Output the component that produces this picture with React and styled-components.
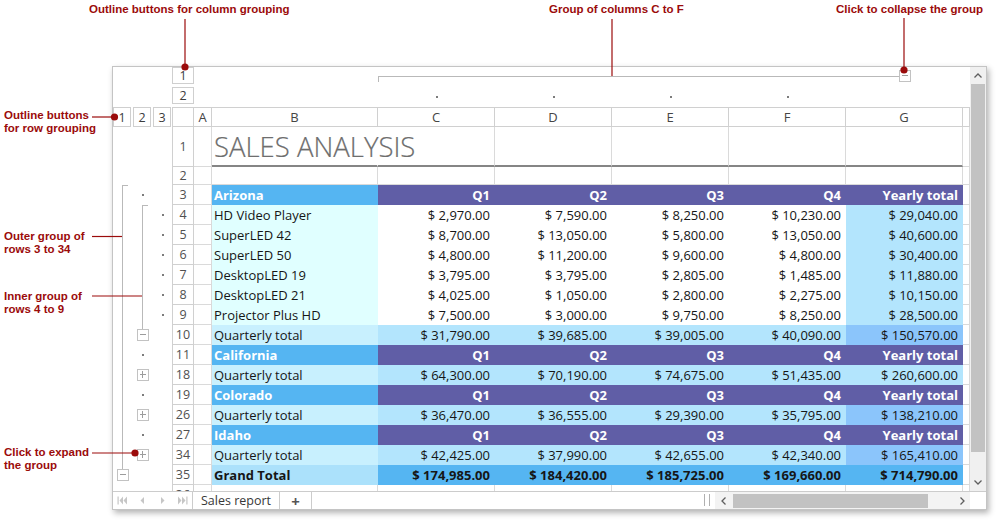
import React from 'react';
import styled, { createGlobalStyle, css } from 'styled-components';

const GlobalStyle = createGlobalStyle`
  html, body {
    margin: 0;
    padding: 0;
    background: #ffffff;
  }
  body {
    font-family: "Open Sans", "Noto Sans", sans-serif;
  }
`;

const GRID = '#dadada';
const HEAD_LINE = '#d0d0d0';
const OUTLINE = '#b9b9b9';
const RED = '#9b0b0b';

const FILL = {
  state: '#55b5f2',
  purple: '#605ea6',
  cyan: '#e0ffff',
  sky: '#b3e5fd',
  pale: '#c8f0fe',
  deep: '#8bc5fb',
  grandB: '#abe1fb',
};

// A..H widths
const COL_W = [18, 166, 117, 117, 117, 117, 117, 7];
const LETTERS = ['A', 'B', 'C', 'D', 'E', 'F', 'G', ''];
const LANE_W = [20, 20, 19];

const Page = styled.div`
  position: relative;
  width: 1000px;
  height: 528px;
  padding: 66px 0 0 112px;
  box-sizing: border-box;
  overflow: hidden;
`;

const Window = styled.div`
  width: 875px;
  box-sizing: border-box;
  border: 1px solid #c4c4c4;
  background: #fff;
  box-shadow: 2px 3px 6px rgba(0, 0, 0, 0.3);
  display: flex;
  flex-direction: column;
`;

const Body = styled.div`
  display: flex;
  height: 424px;
`;

const Sheet = styled.div`
  width: 857px;
  height: 424px;
  overflow: hidden;
  display: flex;
  flex-direction: column;
`;

const Row = styled.div`
  display: flex;
  flex: none;
  height: ${p => p.$h || 20}px;
`;

const OutlineArea = styled.div`
  display: flex;
  flex: none;
  width: 59px;
`;

const Lane = styled.div`
  position: relative;
  flex: none;
  width: ${p => p.$w}px;
  display: flex;
  align-items: center;

  ${p => p.$line && css`
    &::before {
      content: '';
      position: absolute;
      left: 9px;
      top: 0;
      bottom: ${p.$line === 'toBtn' ? 'calc(50% + 6px)' : '0'};
      width: 1px;
      background: ${OUTLINE};
    }
  `}
  ${p => p.$start && css`
    &::after {
      content: '';
      position: absolute;
      left: 9px;
      top: 0;
      width: 6px;
      height: 1px;
      background: ${OUTLINE};
    }
  `}
`;

const Dot = styled.span`
  display: block;
  width: 2px;
  height: 2px;
  margin-left: 9px;
  background: #7c7c7c;
`;

const Toggle = styled.span`
  position: relative;
  display: block;
  flex: none;
  width: 12px;
  height: 12px;
  box-sizing: border-box;
  border: 1px solid #c2c2c2;
  background: #fff;
  margin-left: ${p => (p.$ml === undefined ? 4 : p.$ml)}px;
  margin-top: ${p => p.$mt || 0}px;

  &::before {
    content: '';
    position: absolute;
    left: 2px;
    right: 2px;
    top: 4px;
    height: 1px;
    background: #9c9c9c;
  }
  ${p => p.$plus && css`
    &::after {
      content: '';
      position: absolute;
      top: 1px;
      bottom: 2px;
      left: 4px;
      width: 1px;
      background: #9c9c9c;
    }
  `}
`;

const LevelBtn = styled.div`
  flex: none;
  width: 18px;
  height: 20px;
  box-sizing: border-box;
  margin-right: 2px;
  border: 1px solid #cfcfcf;
  display: flex;
  align-items: center;
  justify-content: center;
  font-size: 12.5px;
  color: #3c3c3c;
`;

const ColLevelSlot = styled.div`
  flex: none;
  width: 22px;
  display: flex;
  align-items: flex-start;
`;

const ColLevelBtn = styled(LevelBtn)`
  width: 22px;
  height: 17px;
  margin: 0;
`;

const ColLane = styled.div`
  position: relative;
  flex: none;
  width: ${p => p.$w}px;
  display: flex;
  justify-content: center;
  align-items: ${p => (p.$top ? 'flex-start' : 'center')};

  ${p => p.$line && css`
    &::before {
      content: '';
      position: absolute;
      top: 9px;
      left: 0;
      right: ${p.$line === 'half' ? 'calc(50% + 6px)' : '0'};
      height: 1px;
      background: ${OUTLINE};
    }
  `}
  ${p => p.$start && css`
    &::after {
      content: '';
      position: absolute;
      top: 9px;
      left: 0;
      width: 1px;
      height: 6px;
      background: ${OUTLINE};
    }
  `}
`;

const ColDot = styled.span`
  display: block;
  width: 2px;
  height: 2px;
  background: #7c7c7c;
`;

const Corner = styled.div`
  flex: none;
  width: 22px;
  box-sizing: border-box;
  border: 1px solid ${HEAD_LINE};
`;

const ColHead = styled.div`
  flex: none;
  width: ${p => p.$w}px;
  box-sizing: border-box;
  border-top: 1px solid ${HEAD_LINE};
  border-bottom: 1px solid ${HEAD_LINE};
  border-right: 1px solid ${HEAD_LINE};
  display: flex;
  align-items: center;
  justify-content: center;
  font-size: 13px;
  color: #454545;
  overflow: hidden;
`;

const RowHead = styled.div`
  flex: none;
  width: 22px;
  box-sizing: border-box;
  border-left: 1px solid ${HEAD_LINE};
  border-right: 1px solid ${HEAD_LINE};
  border-bottom: 1px solid ${HEAD_LINE};
  display: flex;
  align-items: center;
  justify-content: center;
  font-size: 12.5px;
  color: #505050;
`;

const Cell = styled.div`
  flex: none;
  width: ${p => p.$w}px;
  box-sizing: border-box;
  display: flex;
  align-items: center;
  justify-content: ${p => (p.$right ? 'flex-end' : 'flex-start')};
  padding: 0 ${p => (p.$right ? 4 : 2)}px;
  background: ${p => p.$fill || 'transparent'};
  border-right: 1px solid ${p => (p.$fill || p.$noRight ? 'transparent' : GRID)};
  border-bottom: ${p => (p.$title ? `2px solid #858585` : `1px solid ${p.$fill ? 'transparent' : GRID}`)};
  color: ${p => p.$color || '#161616'};
  font-weight: ${p => (p.$bold ? 700 : 400)};
  font-size: 13px;
  white-space: nowrap;
  overflow: ${p => (p.$title ? 'visible' : 'hidden')};
`;

const Title = styled.span`
  font-size: 27.5px;
  font-weight: 300;
  color: #6e6e6e;
  position: relative;
  top: 0;
  -webkit-text-stroke: 0.2px #6e6e6e;
`;

const VScroll = styled.div`
  flex: none;
  width: 16px;
  background: #f0f0f0;
  display: flex;
  flex-direction: column;
  align-items: center;
`;

const ArrowSlot = styled.div`
  flex: none;
  width: 16px;
  height: 17px;
  display: flex;
  align-items: center;
  justify-content: center;
`;

const VThumb = styled.div`
  flex: none;
  width: 14px;
  height: 368px;
  background: #c2c2c2;
`;

const Spacer = styled.div`
  flex: 1;
`;

const TabBar = styled.div`
  display: flex;
  height: 18px;
  box-sizing: border-box;
  border-top: 1px solid #cccccc;
  background: #fff;
`;

const TabNav = styled.div`
  flex: none;
  width: 80px;
  display: flex;
  border-right: 1px solid #cccccc;
  box-sizing: border-box;
`;

const NavSlot = styled.div`
  flex: 1;
  display: flex;
  align-items: center;
  justify-content: center;
  color: #c6c6c6;
`;

const SheetTab = styled.div`
  flex: none;
  width: ${p => p.$w}px;
  box-sizing: border-box;
  border-right: 1px solid #cccccc;
  display: flex;
  align-items: center;
  justify-content: center;
  font-size: ${p => (p.$add ? 15 : 12.5)}px;
  font-weight: ${p => (p.$add ? 700 : 400)};
  color: ${p => (p.$add ? '#555' : '#383838')};
`;

const Splitter = styled.div`
  flex: none;
  width: 4px;
  height: 12px;
  margin: 2px 5px 0 0;
  border-left: 1px solid #b0b0b0;
  border-right: 1px solid #b0b0b0;
`;

const HScroll = styled.div`
  flex: none;
  width: 255px;
  display: flex;
  align-items: center;
  background: #f3f3f3;
`;

const HThumb = styled.div`
  flex: none;
  width: 195px;
  height: 14px;
  margin-left: 2px;
  background: #c2c2c2;
`;

const ScrollCorner = styled.div`
  flex: none;
  width: 16px;
`;

const Callouts = styled.svg`
  position: absolute;
  left: 0;
  top: 0;
  pointer-events: none;
`;

const Label = styled.div`
  position: absolute;
  left: ${p => p.$x}px;
  top: ${p => p.$y}px;
  font-family: "Liberation Sans", Arial, sans-serif;
  font-weight: 700;
  font-size: 11.5px;
  line-height: 13px;
  color: ${RED};
  white-space: nowrap;
`;

const Chevron = ({ dir }) => {
  const pts = {
    up: '0.5,4.5 4,1 7.5,4.5',
    down: '0.5,0.5 4,4 7.5,0.5',
    left: '4.5,0.5 1,4 4.5,7.5',
    right: '0.5,0.5 4,4 0.5,7.5',
  }[dir];
  const vertical = dir === 'up' || dir === 'down';
  return (
    <svg width={vertical ? 8 : 5} height={vertical ? 5 : 8}>
      <polyline points={pts} fill="none" stroke="#5e5e5e" strokeWidth="1.3" />
    </svg>
  );
};

const NavIcon = ({ kind }) => (
  <svg width="11" height="9" viewBox="0 0 11 9" fill="currentColor">
    {kind === 'first' && (
      <>
        <rect x="0.5" y="0.5" width="1.2" height="8" />
        <path d="M6 0.5 L2.5 4.5 L6 8.5Z M10 0.5 L6.5 4.5 L10 8.5Z" />
      </>
    )}
    {kind === 'prev' && <path d="M7 1 L3.5 4.5 L7 8Z" />}
    {kind === 'next' && <path d="M4 1 L7.5 4.5 L4 8Z" />}
    {kind === 'last' && (
      <>
        <path d="M1 0.5 L4.5 4.5 L1 8.5Z M5 0.5 L8.5 4.5 L5 8.5Z" />
        <rect x="9.3" y="0.5" width="1.2" height="8" />
      </>
    )}
  </svg>
);

const rows = [
  { n: 1, type: 'title', h: 40, ol: ['', '', ''] },
  { n: 2, type: 'blank', h: 18, ol: ['', '', ''] },
  { n: 3, type: 'state', label: 'Arizona', ol: ['start', 'dot', ''] },
  { n: 4, type: 'product', label: 'HD Video Player', v: ['2,970.00', '7,590.00', '8,250.00', '10,230.00', '29,040.00'], ol: ['line', 'start', 'dot'] },
  { n: 5, type: 'product', label: 'SuperLED 42', v: ['8,700.00', '13,050.00', '5,800.00', '13,050.00', '40,600.00'], ol: ['line', 'line', 'dot'] },
  { n: 6, type: 'product', label: 'SuperLED 50', v: ['4,800.00', '11,200.00', '9,600.00', '4,800.00', '30,400.00'], ol: ['line', 'line', 'dot'] },
  { n: 7, type: 'product', label: 'DesktopLED 19', v: ['3,795.00', '3,795.00', '2,805.00', '1,485.00', '11,880.00'], ol: ['line', 'line', 'dot'] },
  { n: 8, type: 'product', label: 'DesktopLED 21', v: ['4,025.00', '1,050.00', '2,800.00', '2,275.00', '10,150.00'], ol: ['line', 'line', 'dot'] },
  { n: 9, type: 'product', label: 'Projector Plus HD', v: ['7,500.00', '3,000.00', '9,750.00', '8,250.00', '28,500.00'], ol: ['line', 'line', 'dot'] },
  { n: 10, type: 'total', dark: true, v: ['31,790.00', '39,685.00', '39,005.00', '40,090.00', '150,570.00'], ol: ['line', 'minusLine', ''] },
  { n: 11, type: 'state', label: 'California', ol: ['line', 'dot', ''] },
  { n: 18, type: 'total', v: ['64,300.00', '70,190.00', '74,675.00', '51,435.00', '260,600.00'], ol: ['line', 'plus', ''] },
  { n: 19, type: 'state', label: 'Colorado', ol: ['line', 'dot', ''] },
  { n: 26, type: 'total', dark: true, v: ['36,470.00', '36,555.00', '29,390.00', '35,795.00', '138,210.00'], ol: ['line', 'plus', ''] },
  { n: 27, type: 'state', label: 'Idaho', ol: ['line', 'dot', ''] },
  { n: 34, type: 'total', dark: true, v: ['42,425.00', '37,990.00', '42,655.00', '42,340.00', '165,410.00'], ol: ['line', 'plus', ''] },
  { n: 35, type: 'grand', v: ['174,985.00', '184,420.00', '185,725.00', '169,660.00', '714,790.00'], ol: ['minusLine', '', ''] },
  { n: 36, type: 'blank', ol: ['', '', ''] },
];

function cellsFor(r) {
  const money = v => '$ ' + v;
  switch (r.type) {
    case 'title':
      return [
        {},
        { text: <Title>SALES ANALYSIS</Title>, title: true, noRight: true },
        { title: true }, { title: true }, { title: true }, { title: true }, { title: true },
        {},
      ];
    case 'state':
      return [
        {},
        { text: r.label, fill: FILL.state, bold: true, color: '#fff' },
        ...['Q1', 'Q2', 'Q3', 'Q4', 'Yearly total'].map(t => ({ text: t, fill: FILL.purple, bold: true, color: '#fff', right: true })),
        {},
      ];
    case 'product':
      return [
        {},
        { text: r.label, fill: FILL.cyan },
        ...r.v.slice(0, 4).map(v => ({ text: money(v), fill: '#ffffff', right: true })),
        { text: money(r.v[4]), fill: FILL.sky, right: true },
        {},
      ];
    case 'total':
      return [
        {},
        { text: 'Quarterly total', fill: FILL.pale },
        ...r.v.slice(0, 4).map(v => ({ text: money(v), fill: FILL.sky, right: true })),
        { text: money(r.v[4]), fill: r.dark ? FILL.deep : FILL.sky, right: true },
        {},
      ];
    case 'grand':
      return [
        {},
        { text: 'Grand Total', fill: FILL.grandB, bold: true },
        ...r.v.map(v => ({ text: money(v), fill: FILL.state, bold: true, right: true })),
        {},
      ];
    default:
      return COL_W.map(() => ({}));
  }
}

function OutlineLane({ kind, w }) {
  const line = kind === 'line' || kind === 'start' ? 'full' : kind === 'minusLine' ? 'toBtn' : null;
  return (
    <Lane $w={w} $line={line} $start={kind === 'start'}>
      {kind === 'dot' && <Dot />}
      {(kind === 'minusLine' || kind === 'plus') && <Toggle $plus={kind === 'plus'} />}
    </Lane>
  );
}

function SheetRow({ r }) {
  return (
    <Row $h={r.h}>
      <OutlineArea>
        {r.ol.map((k, i) => <OutlineLane key={i} kind={k} w={LANE_W[i]} />)}
      </OutlineArea>
      <RowHead>{r.n}</RowHead>
      {cellsFor(r).map((c, i) => (
        <Cell
          key={i}
          $w={COL_W[i]}
          $fill={c.fill}
          $bold={c.bold}
          $color={c.color}
          $right={c.right}
          $title={c.title}
          $noRight={c.noRight}
        >
          {c.text}
        </Cell>
      ))}
    </Row>
  );
}

function ColumnOutline() {
  return (
    <>
      <Row>
        <OutlineArea />
        <ColLevelSlot><ColLevelBtn>1</ColLevelBtn></ColLevelSlot>
        {COL_W.map((w, i) => {
          if (i === 2) return <ColLane key={i} $w={w} $line="full" $start />;
          if (i > 2 && i < 6) return <ColLane key={i} $w={w} $line="full" />;
          if (i === 6) return <ColLane key={i} $w={w} $line="half" $top><Toggle $ml={0} $mt={3} /></ColLane>;
          return <ColLane key={i} $w={w} />;
        })}
      </Row>
      <Row>
        <OutlineArea />
        <ColLevelSlot><ColLevelBtn>2</ColLevelBtn></ColLevelSlot>
        {COL_W.map((w, i) => (
          <ColLane key={i} $w={w}>{i >= 2 && i <= 5 && <ColDot />}</ColLane>
        ))}
      </Row>
      <Row>
        <OutlineArea>
          <LevelBtn>1</LevelBtn>
          <LevelBtn>2</LevelBtn>
          <LevelBtn>3</LevelBtn>
        </OutlineArea>
        <Corner />
        {COL_W.map((w, i) => <ColHead key={i} $w={w}>{LETTERS[i]}</ColHead>)}
      </Row>
    </>
  );
}

function Annotations() {
  return (
    <>
      <Label $x={89} $y={3}>Outline buttons for column grouping</Label>
      <Label $x={549} $y={3}>Group of columns C to F</Label>
      <Label $x={836} $y={3}>Click to collapse the group</Label>
      <Label $x={4} $y={109}>Outline buttons<br />for row grouping</Label>
      <Label $x={4} $y={230}>Outer group of<br />rows 3 to 34</Label>
      <Label $x={4} $y={290}>Inner group of<br />rows 4 to 9</Label>
      <Label $x={4} $y={446}>Click to expand<br />the group</Label>
      <Callouts width="1000" height="528">
        <g stroke={RED} strokeWidth="1.2" fill="none">
          <path d="M185 19 V66" />
          <path d="M612 19 V76" />
          <path d="M904 18 V69" />
          <path d="M92 117 H113" />
          <path d="M92 236.5 H122" />
          <path d="M92 296 H142" />
          <path d="M92 453 H133" />
        </g>
        <g fill={RED}>
          <circle cx="185" cy="67" r="3.6" />
          <circle cx="904" cy="70" r="3.6" />
          <circle cx="114.5" cy="117" r="3.6" />
          <circle cx="135" cy="453" r="3.6" />
        </g>
      </Callouts>
    </>
  );
}

export default function App() {
  return (
    <>
      <GlobalStyle />
      <Page>
        <Window>
          <Body>
            <Sheet>
              <ColumnOutline />
              {rows.map(r => <SheetRow key={r.n} r={r} />)}
            </Sheet>
            <VScroll>
              <ArrowSlot><Chevron dir="up" /></ArrowSlot>
              <VThumb />
              <Spacer />
              <ArrowSlot><Chevron dir="down" /></ArrowSlot>
            </VScroll>
          </Body>
          <TabBar>
            <TabNav>
              <NavSlot><NavIcon kind="first" /></NavSlot>
              <NavSlot><NavIcon kind="prev" /></NavSlot>
              <NavSlot><NavIcon kind="next" /></NavSlot>
              <NavSlot><NavIcon kind="last" /></NavSlot>
            </TabNav>
            <SheetTab $w={87}>Sales report</SheetTab>
            <SheetTab $w={32} $add>+</SheetTab>
            <Spacer />
            <Splitter />
            <HScroll>
              <ArrowSlot><Chevron dir="left" /></ArrowSlot>
              <HThumb />
              <Spacer />
              <ArrowSlot><Chevron dir="right" /></ArrowSlot>
            </HScroll>
            <ScrollCorner />
          </TabBar>
        </Window>
        <Annotations />
      </Page>
    </>
  );
}
